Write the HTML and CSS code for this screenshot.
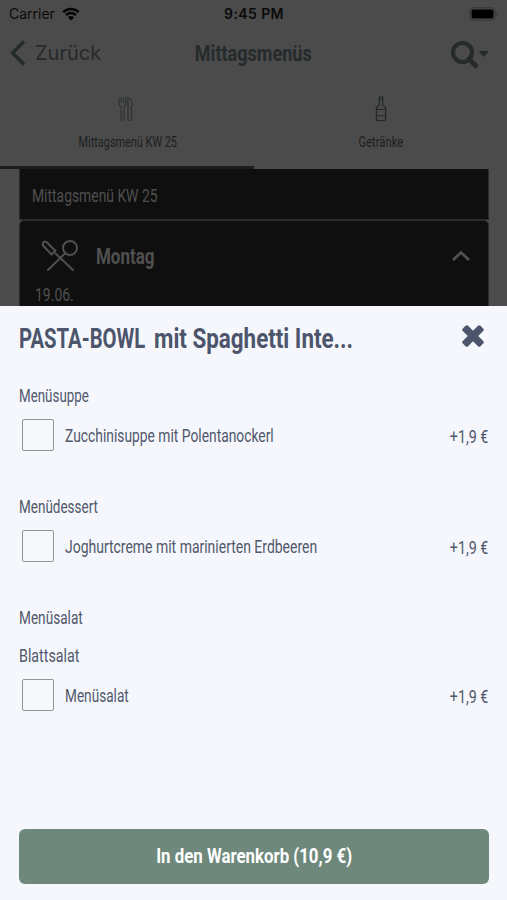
FILE: index.html
```
<!DOCTYPE html>
<html lang="de">
<head>
<meta charset="utf-8">
<title>Mittagsmenüs</title>
<link rel="stylesheet" href="styles.css">
</head>
<body>
<div class="app">
  <div class="status">
    <div class="carrier"><span>Carrier</span>
      <svg width="18" height="14" viewBox="0 0 18 14"><path d="M1.2 5.1a11.2 11.2 0 0 1 15.6 0M4 8.1a7.2 7.2 0 0 1 10 0" fill="none" stroke="#050505" stroke-width="2.5"/><path d="M5.9 10.4a4.5 4.5 0 0 1 6.2 0L9 13.6z" fill="#050505"/></svg>
    </div>
    <div class="time">9:45 PM</div>
    <svg class="battery" width="30" height="14" viewBox="0 0 30 14"><rect x=".8" y=".8" width="25.4" height="12.4" rx="3.5" fill="none" stroke="#353535"/><rect x="2.5" y="2.5" width="22" height="9" rx="1.8" fill="#000"/><path d="M27.5 5v4c1.5-.5 1.5-3.500 0-4" fill="#303030"/></svg>
  </div>
  <header class="nav">
    <div class="back">
      <svg width="16" height="26" viewBox="0 0 16 26"><path d="M14 1.500 2.500 13 14 24.500" fill="none" stroke="#252a2a" stroke-width="3.400"/></svg>
      <span>Zurück</span>
    </div>
    <h1><span class="narrow center s-nav">Mittagsmenüs</span></h1>
    <svg class="search" width="40" height="30" viewBox="0 0 40 30"><circle cx="12.500" cy="13.500" r="9.500" fill="none" stroke="#252b29" stroke-width="4.200"/><path d="m19 20 6.500 6.500" stroke="#252b29" stroke-width="5" stroke-linecap="round"/><path d="M28.500 12h10.500l-5.200 6z" fill="#252b29"/></svg>
  </header>
  <nav class="tabs">
    <div class="tab active">
      <svg width="16" height="26" viewBox="0 0 16 26"><g fill="none" stroke="#303534" stroke-width="1.300"><path d="M1 1.500v6c0 1.500 1 2.500 2 3v11.500c0 3 3 3 3 0V10.500c1-.5 2-1.500 2-3v-6M3.300 1.500V7M5.700 1.500V7"/><path d="M10 1.500v21c0 2.500 3.500 2.500 3.500 0v-8.500l-1-1.500c3-3 2-9.500-2.500-11z"/></g></svg>
      <span class="narrow center s-tab1">Mittagsmenü KW 25</span>
    </div>
    <div class="tab">
      <svg width="14" height="26" viewBox="0 0 14 27"><path d="M5.200 1h3.600v8c0 1.500 3 2 3 4v10.500c0 1.500-.5 2-1.500 2H3.700c-1 0-1.500-.5-1.500-2V13c0-2 3-2.500 3-4zM2.200 14h9.600M2.200 20.500h9.600M5.200 3.500h3.600" fill="none" stroke="#222827" stroke-width="1.200"/></svg>
      <span class="narrow center s-tab2">Getränke</span>
    </div>
  </nav>
  <main class="list">
    <div class="week"><span class="narrow s-week">Mittagsmenü KW 25</span></div>
    <section class="day">
      <div class="day-head">
        <svg width="38" height="34" viewBox="0 0 38 34"><g fill="none" stroke="#505050" stroke-width="2" stroke-linecap="round" stroke-linejoin="round"><path d="m7 31 17.500-17M32 31 14.500 14.500"/><circle cx="29" cy="9" r="7"/><path d="M2 6.500c-1-2.500 1-5 3.500-3.500L14 11.500l-3.500 4zM10.500 15.500l4-4"/></g></svg>
        <span class="narrow s-day">Montag</span>
        <svg class="chev" width="20" height="12" viewBox="0 0 20 12"><path d="m2 10 8-7.500 8 7.500" fill="none" stroke="#505050" stroke-width="2.800"/></svg>
      </div>
      <div class="date"><span class="narrow s-date">19.06.</span></div>
    </section>
  </main>
</div>
<div class="sheet">
  <div class="sheet-head">
    <h2><span class="narrow s-title-caps">PASTA-BOWL</span><span class="narrow s-title">mit Spaghetti Inte...</span></h2>
    <svg width="22" height="22" viewBox="-11 -11 22 22"><g fill="#4c556b"><rect x="-12.500" y="-3.700" width="25" height="7.400" rx="1.800" transform="rotate(45)"/><rect x="-12.500" y="-3.700" width="25" height="7.400" rx="1.800" transform="rotate(-45)"/></g></svg>
  </div>
  <div class="group">
    <div class="label"><span class="narrow s-suppe">Menüsuppe</span></div>
    <label class="option"><i class="box"></i><span class="narrow s-zucchini">Zucchinisuppe mit Polentanockerl</span><span class="narrow price">+1,9 €</span></label>
  </div>
  <div class="group">
    <div class="label"><span class="narrow s-dessert">Menüdessert</span></div>
    <label class="option"><i class="box"></i><span class="narrow s-joghurt">Joghurtcreme mit marinierten Erdbeeren</span><span class="narrow price">+1,9 €</span></label>
  </div>
  <div class="group">
    <div class="label"><span class="narrow s-salat">Menüsalat</span></div>
    <div class="label sub"><span class="narrow s-blatt">Blattsalat</span></div>
    <label class="option"><i class="box"></i><span class="narrow s-salat">Menüsalat</span><span class="narrow price">+1,9 €</span></label>
  </div>
  <button class="cart"><span class="narrow center s-cart">In den Warenkorb (10,9 €)</span></button>
</div>
</body>
</html>
```
FILE: styles.css
```
* { box-sizing: border-box; }
body {
  margin: 0;
  width: 507px;
  height: 900px;
  overflow: hidden;
  display: flex;
  flex-direction: column;
  background: #4b4b4b;
  font-family: Roboto, "Liberation Sans", sans-serif;
}
svg { display: block; flex: none; }
h1, h2 { margin: 0; font-size: inherit; }

/* condensed lettering: each text class sets its own horizontal scale */
.narrow {
  display: inline-block;
  white-space: nowrap;
  transform: scaleX(var(--sx, .7));
  transform-origin: left center;
}
.center { transform-origin: center; }
.s-nav { --sx: .82; }
.s-tab1 { --sx: .726; }
.s-tab2 { --sx: .75; }
.s-week { --sx: .743; }
.s-day { --sx: .79; }
.s-date { --sx: .755; }
.s-title-caps { --sx: .737; }
.s-title { --sx: .814; margin-left: -36px; }
.s-suppe { --sx: .703; }
.s-zucchini { --sx: .728; }
.s-dessert { --sx: .71; }
.s-joghurt { --sx: .735; }
.s-salat { --sx: .717; }
.s-blatt { --sx: .75; }
.s-cart { --sx: .802; }

.app { height: 306px; overflow: hidden; flex: none; }
.status {
  height: 28px;
  display: grid;
  grid-template-columns: 1fr auto 1fr;
  align-items: center;
  padding: 0 8px 1px 9px;
  font: 14px Inter, sans-serif;
  color: #0a0a0a;
}
.carrier { display: flex; align-items: center; gap: 7px; }
.time { font-weight: 600; letter-spacing: .4px; }
.battery { justify-self: end; }
.nav {
  height: 51px;
  display: grid;
  grid-template-columns: 1fr auto 1fr;
  align-items: center;
  padding: 0 17px;
  color: #252a2b;
}
.back {
  display: flex;
  align-items: center;
  gap: 9px;
  margin: -1px 0 0 -7px;
  font: 20px Inter, sans-serif;
}
.nav h1 { font-size: 22px; }
.search { justify-self: end; }
.tabs { height: 90px; display: flex; }
.tab {
  flex: 1;
  display: flex;
  flex-direction: column;
  align-items: center;
  padding: 17px 0 0 1px;
  font-size: 15px;
  line-height: 20px;
  color: #1d2020;
}
.tab .narrow { margin: 10px 0 0 1px; }
.tab.active { border-bottom: 3px solid #1b1e1e; }
.tab.active svg { margin-right: 2px; }
.list { margin: 0 18px 0 19px; color: #505050; }
.week {
  height: 51px;
  padding-left: 11.500px;
  border: 1px solid #2c2c2c;
  border-top: 0;
  background: #0f0f0f;
  font-size: 18.700px;
  line-height: 54px;
}
.day {
  height: 90px;
  border: 1px solid #2c2c2c;
  border-radius: 5px 5px 0 0;
  background: #0f0f0f;
}
.day-head {
  display: flex;
  align-items: center;
  height: 60px;
  padding: 9px 17px 0 21px;
  font-size: 21.500px;
  font-weight: 700;
}
.day-head .narrow { margin: 2px 0 0 17px; }
.chev { margin-left: auto; }
.date { padding-left: 15px; font-size: 18.500px; line-height: 28px; }

.sheet {
  flex: 1;
  display: flex;
  flex-direction: column;
  padding: 0 18px 16px 19px;
  background: #f5f7fc;
  color: #50586b;
  font-size: 19px;
}
.sheet-head {
  height: 64px;
  margin-bottom: 14px;
  padding-right: 5px;
  display: flex;
  align-items: center;
  justify-content: space-between;
  font-size: 27.500px;
  color: #4c556b;
}
.sheet-head h2 { width: 340px; white-space: nowrap; }
.sheet-head svg { margin-top: -4px; }
.group { margin-bottom: 33px; }
.label { height: 24px; line-height: 24px; }
.sub { margin-top: 14px; }
.option { display: flex; align-items: center; height: 54px; }
.box {
  width: 32px;
  height: 32px;
  margin: 0 11px 0 3px;
  border: 1.500px solid #8c9894;
  border-radius: 2px;
  background: #f5f9fb;
}
.price { --sx: .75; margin: 0 1px 0 auto; padding-top: 3px; transform-origin: right center; }
.cart {
  height: 55px;
  margin-top: auto;
  padding: 0 0 2px;
  border: 0;
  border-radius: 6px;
  background: #6e897b;
  color: #fff;
  font: 700 21px Roboto, sans-serif;
}
```
